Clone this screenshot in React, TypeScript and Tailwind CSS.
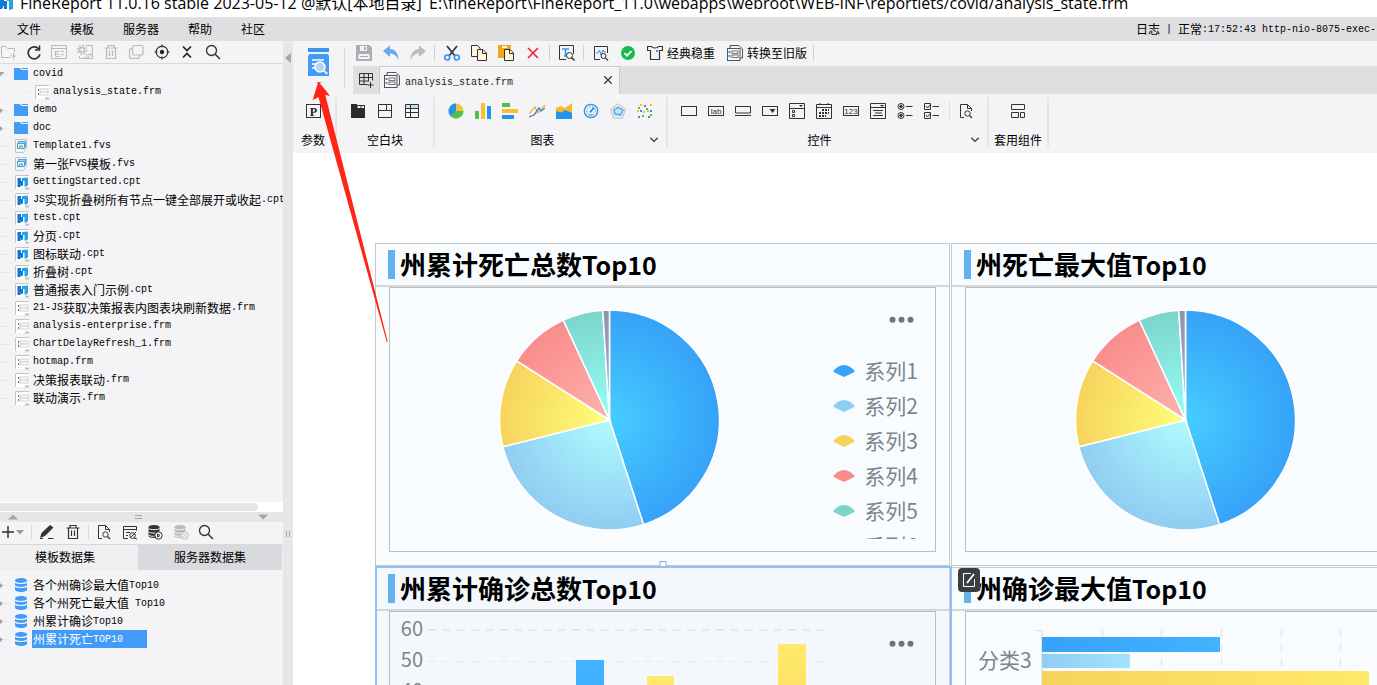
import React from "react";

type IconProps = { children: React.ReactNode; size?: number };

function Svg({ children, size = 16 }: IconProps) {
  return (
    <svg width={size} height={size} viewBox="0 0 16 16" fill="none" stroke="#333" strokeWidth="1" className="block shrink-0" aria-hidden="true">
      {children}
    </svg>
  );
}

/* ---------- mixed CJK / monospace text ---------- */

function Mixed({ text }: { text: string }) {
  const parts = text.split(/([\x20-\x7e]+)/).filter(Boolean);
  return (
    <>
      {parts.map((p, i) =>
        /^[\x20-\x7e]/.test(p) ? (
          <span key={i} className="font-['Liberation_Mono',monospace] text-[10px]">
            {p}
          </span>
        ) : (
          <span key={i} className="text-[12px]">
            {p}
          </span>
        ),
      )}
    </>
  );
}

/* ---------- side panel icons ---------- */

const GREY = "#b9babd";

const FolderPlus = () => (
  <Svg>
    <g stroke={GREY}>
      <path d="M10 13.500H1.500v-11h4l2 2h7v4M13.500 9v6M10.500 12h5.500" />
    </g>
  </Svg>
);
const Refresh = () => (
  <Svg>
    <path d="M12.800 5A6 6 0 1 0 14 10.300" strokeWidth="1.700" />
    <path d="M13.500 1.500v4.500H9" strokeWidth="1.500" />
  </Svg>
);
const TreePanel = () => (
  <Svg>
    <g stroke={GREY}>
      <rect x="0.5" y="1.500" width="15" height="13" />
      <path d="M0 4.500h16M4.500 7v5M4.500 7.500h4M4.500 10h4M4.500 12.500h4M10 7.500h3M10 10.500h3" />
    </g>
  </Svg>
);
const GearWindow = () => (
  <Svg>
    <g stroke={GREY}>
      <circle cx="5" cy="6" r="2.500" strokeWidth="1.500" />
      <circle cx="5" cy="6" r="4.500" strokeWidth="1.500" strokeDasharray="1.800 1.700" />
      <path d="M9 1.500h6.500v13H2.500V12M8 14.500l2-4 5.500-.5M10 14l5-4" />
    </g>
  </Svg>
);
const Trash = ({ color = "#333" }: { color?: string }) => (
  <Svg>
    <g stroke={color} strokeWidth="1.200">
      <path d="M1.500 4h13M5 4V1.500h6V4M3.500 4v10.500h9V4M6.500 6.500v5.500M9.500 6.500v5.500" />
    </g>
  </Svg>
);
const CopyGrey = () => (
  <Svg>
    <g stroke={GREY} strokeWidth="1.200">
      <rect x="4.500" y="1.500" width="10.500" height="9.500" rx="2" />
      <path d="M4.500 4.500h-1a2 2 0 0 0-2 2v6a2 2 0 0 0 2 2h6a2 2 0 0 0 2-2V11" />
    </g>
  </Svg>
);
const Locate = () => (
  <Svg>
    <circle cx="8" cy="8" r="5.800" strokeWidth="1.200" />
    <circle cx="8" cy="8" r="2.200" fill="#222" stroke="none" />
    <path d="M8 .5v3M8 12.500v3M.5 8h3M12.500 8h3" strokeWidth="1.200" />
  </Svg>
);
const Collapse = () => (
  <Svg>
    <path d="M4 2.500l4 4 4-4M4 13.500l4-4 4 4" strokeWidth="1.700" stroke="#222" />
  </Svg>
);
const Search = () => (
  <Svg>
    <circle cx="6.500" cy="6.500" r="5" strokeWidth="1.300" />
    <path d="M10.200 10.200l4.800 4.800" strokeWidth="1.500" />
  </Svg>
);
const Plus = () => (
  <Svg>
    <path d="M8 2v12M2 8h12" strokeWidth="1.500" />
  </Svg>
);
const Pencil = () => (
  <Svg>
    <path d="M1 14l1.500-5L11 1l3.500 2.500L6 12z" fill="#333" stroke="none" />
    <path d="M9 14.500h5.500M1 14.500h3" />
  </Svg>
);
const DocSearch = () => (
  <Svg>
    <path d="M6 14.500H2.500v-13h7l4 4V8M9.500 1.500v4h4" />
    <circle cx="9.500" cy="10.500" r="2.700" />
    <path d="M11.500 12.500l2.500 2.500" strokeWidth="1.300" />
  </Svg>
);
const EditWindow = () => (
  <Svg>
    <path d="M6 14.500H1.500v-12h13v4M1.500 5.500h13M4 8.500h4M4 11.500h2" />
    <circle cx="10.500" cy="11.500" r="2.800" />
    <path d="M9 13l5-5M12 14l3 1" />
  </Svg>
);
const DbAction = ({ color, mark }: { color: string; mark: string }) => (
  <Svg>
    <path d="M1.500 3c0-1.200 2.500-2 5.500-2s5.500.8 5.500 2v9c0 1.200-2.500 2-5.500 2s-5.500-.8-5.500-2z" fill={color} stroke="none" />
    <path d="M1.500 4.500c1.500 1.500 9.500 1.500 11 0M1.500 8c1.500 1.500 9.500 1.500 11 0M1.500 11c1.500 1.500 5 1.500 6 1" stroke="#f4f4f6" />
    <circle cx="11.500" cy="11.500" r="3.700" fill="#f4f4f6" stroke={color} />
    <path d={mark} stroke={color} />
  </Svg>
);

const FolderIcon = () => (
  <Svg>
    <path d="M1 2h6l1.500 2H15v10H1z" fill="#439bf8" stroke="none" />
    <path d="M8.500 2l.5.500H15" stroke="#439bf8" />
  </Svg>
);
const Page = ({ children }: { children: React.ReactNode }) => (
  <Svg>
    <rect x="2" y="1" width="14" height="14" fill="#fff" stroke="none" />
    <path d="M2.500 15V1.500H16" stroke="#c4c4c4" />
    <path d="M12 14.500h4" stroke="#c0c0c0" strokeWidth="2" />
    {children}
  </Svg>
);
const CptIcon = () => (
  <Page>
    <path d="M4.500 4h3.500v3h2v4.500l-2 .5V9.500L7.500 13h-3z" fill="#1177d4" stroke="none" />
    <path d="M9 4l6-.5V11l-1.500 1.500h-2V7H9z" fill="#25a5e8" stroke="none" />
  </Page>
);
const FrmIcon = () => (
  <Page>
    <rect x="7" y="5" width="8" height="3" fill="#fafafa" stroke="#cfcfcf" />
    <rect x="7" y="8" width="8" height="3" fill="#fafafa" stroke="#d4d4d4" />
    <path d="M5.500 5v2M5.500 9v2" stroke="#2d84b5" />
  </Page>
);
const FvsIcon = () => (
  <Svg>
    <path d="M2.500 1.500h11v9l-3 4h-8z" fill="#f4f7fa" stroke="#bfc3c8" />
    <rect x="5.500" y="3.500" width="7" height="5" fill="#9fd3f8" stroke="#4aa2e2" />
    <rect x="4.500" y="5.500" width="7" height="5" fill="#e6f5ee" stroke="#4aa2e2" />
    <path d="M6.500 9.500V8M8 9.500V7M9.500 9.500V8" stroke="#39a66c" />
  </Svg>
);
const DbIcon = () => (
  <Svg>
    <path d="M2 3.500C2 2 4.500 1 8 1s6 1 6 2.500v9C14 14 11.500 15 8 15s-6-1-6-2.500z" fill="#439bf8" stroke="none" />
    <path d="M2 5c2 2 10 2 12 0M2 9c2 2 10 2 12 0" stroke="#f4f4f6" strokeWidth="1.200" />
  </Svg>
);

/* ---------- toolbar icons ---------- */

const Save = () => (
  <Svg>
    <path d="M0 0h13.500L16 2.500V16H0z" fill="#acadb0" stroke="none" />
    <path d="M4 1h7v5H4z" fill="#f4f4f6" stroke="none" />
    <path d="M8 2h2v3H8z" fill="#acadb0" stroke="none" />
    <path d="M2.500 9h11v5h-11z" fill="#f4f4f6" stroke="none" />
    <path d="M4 11.500h8" stroke="#acadb0" />
  </Svg>
);
const Undo = () => (
  <Svg>
    <path d="M0 6l7-5.500V4c5 0 8.500 4 8.500 11.500C13.500 10.500 11 8.500 7 8.500V12z" fill="#67aaf0" stroke="none" />
  </Svg>
);
const Redo = () => (
  <Svg>
    <path d="M16 6L9 .5V4C4 4 .5 8 .5 15.500 2.500 10.500 5 8.500 9 8.500V12z" fill="#bcbdbf" stroke="none" />
  </Svg>
);
const Cut = () => (
  <Svg>
    <path d="M3 1l8 10M13 1L5 11" stroke="#3a3a3a" strokeWidth="1.800" />
    <circle cx="3.200" cy="12.500" r="2.500" stroke="#3b94ec" strokeWidth="1.700" />
    <circle cx="12.800" cy="12.500" r="2.500" stroke="#3b94ec" strokeWidth="1.700" />
  </Svg>
);
const Copy = () => (
  <Svg>
    <path d="M.5.5h6l2.500 2.500v8.500H.5z" fill="#fff6dc" />
    <path d="M6.500 4.500h5.500l3.500 3.500v7.500h-9z" fill="#fff6dc" />
    <path d="M11.500 4.500v4h4" />
  </Svg>
);
const Paste = () => (
  <Svg>
    <path d="M0 0h13v13H0z" fill="#f2a81d" stroke="none" />
    <path d="M4 2h5" stroke="#fff6dc" strokeWidth="2" />
    <path d="M6.500 4.500h5.500l3.500 3.500v7.500h-9z" fill="#fff6dc" />
    <path d="M11.500 4.500v4h4" />
  </Svg>
);
const Remove = () => (
  <Svg>
    <path d="M3 3l10 10M13 3L3 13" stroke="#ea2b32" strokeWidth="1.700" />
  </Svg>
);
const TextSearch = () => (
  <Svg>
    <path d="M7 14.500H.5V.5h14V9" />
    <path d="M3 4h7M6.500 4v7M5 11h3" stroke="#3b94ec" strokeWidth="1.500" />
    <circle cx="10.500" cy="10.500" r="3" fill="#f4f4f6" />
    <path d="M12.500 12.500l3 3" strokeWidth="1.500" />
  </Svg>
);
const ChartSearch = () => (
  <Svg>
    <path d="M7 14.500H1.500v-13h13V8" />
    <path d="M3 8h2l1.500-3L8 10l2-5 1 2h2" stroke="#3b94ec" />
    <circle cx="10.500" cy="11" r="2.500" fill="#f4f4f6" />
    <path d="M12.500 13l2.500 2.500" strokeWidth="1.300" />
  </Svg>
);
const Check = () => (
  <Svg>
    <circle cx="8" cy="8" r="7" fill="#16bb50" stroke="none" />
    <path d="M4.500 8.200l2.500 2.500 4.500-4.500" stroke="#fff" strokeWidth="1.800" />
  </Svg>
);
const Shirt = () => (
  <Svg>
    <path d="M.5 1.500h4c1 2 6 2 7 0h4v4h-3v9h-9v-9h-3z" strokeWidth="1.200" />
    <path d="M9 6h2" stroke="#3b94ec" strokeWidth="2" />
  </Svg>
);
const FormIcon = () => (
  <Svg>
    <path d="M3 3V.5h9L15.500 4v9H13" stroke="#555" />
    <rect x=".5" y="3.500" width="12.500" height="12" fill="#f8f8f9" stroke="#555" />
    <path d="M2.500 6v2M2.500 10v2" stroke="#3b94ec" strokeWidth="2" />
    <rect x="5" y="6" width="6" height="2.500" stroke="#777" />
    <rect x="5" y="10" width="6" height="2.500" stroke="#777" />
  </Svg>
);
const GridPlus = () => (
  <Svg>
    <path d="M1.500 1.500h13v7M1.500 1.500v11h8M1.500 5.500h13M1.500 9h9M6 1.500v11M10.500 1.500v8M12.500 10v6M9.500 13h6" />
  </Svg>
);

/* ---------- ribbon icons ---------- */

const ParamIcon = () => (
  <Svg>
    <rect x="1.500" y="1.500" width="14" height="13" />
    <text x="8.500" y="12.500" textAnchor="middle" fill="#222" stroke="none" className="font-['Liberation_Serif',serif] text-[12px] font-bold">
      P
    </text>
  </Svg>
);
const TabBlock = () => (
  <Svg>
    <path d="M1 1h6v1h8v13H1z" fill="#2b2b2b" stroke="none" />
    <path d="M7.500 3h3v2h-3zM11.500 3H14v2h-2.500z" fill="#f4f4f6" stroke="none" />
  </Svg>
);
const BodyBlock = () => (
  <Svg>
    <path d="M1.500 1.500h13v13h-13zM1.500 7.500h13M9.500 1.500v6" />
  </Svg>
);
const ReportBlock = () => (
  <Svg>
    <path d="M1.500 1.500h13v4h-13z" fill="#bfe2fb" stroke="none" />
    <path d="M1.500 1.500h13v13h-13zM1.500 5.500h13M1.500 9.500h13M6.500 1.500v13" />
  </Svg>
);
const PieIcon = () => (
  <Svg>
    <circle cx="8" cy="8" r="7.500" fill="#fbbf2f" stroke="none" />
    <path d="M8 8V.5A7.500 7.500 0 0 0 3 13.500z" fill="#2196e8" stroke="none" />
    <path d="M8 8L3 13.500A7.500 7.500 0 0 0 15.500 8z" fill="#4fc151" stroke="none" />
  </Svg>
);
const ColumnIcon = () => (
  <Svg>
    <path d="M0 8h4v8H0z" fill="#4fc151" stroke="none" />
    <path d="M6 0h4v16H6z" fill="#fbc02f" stroke="none" />
    <path d="M12 3h4v13h-4z" fill="#2196e8" stroke="none" />
  </Svg>
);
const BarIcon = () => (
  <Svg>
    <path d="M0 0h8v4H0z" fill="#4fc151" stroke="none" />
    <path d="M0 6h16v4H0z" fill="#fbc02f" stroke="none" />
    <path d="M0 12h12v4H0z" fill="#2196e8" stroke="none" />
  </Svg>
);
const LineIcon = () => (
  <Svg>
    <path d="M0 11l6-7 3 6 7-8" stroke="#fbb02f" strokeWidth="1.300" />
    <path d="M0 14l5-2 5-7 2 3 4-3" stroke="#2b86d9" strokeWidth="1.300" />
  </Svg>
);
const AreaIcon = () => (
  <Svg>
    <path d="M0 5l5-2 4 2 7-5v14H0z" fill="#fbb62f" stroke="none" />
    <path d="M0 8l5 1.500 4-2.500 7 3v6H0z" fill="#2196e8" stroke="none" />
  </Svg>
);
const GaugeIcon = () => (
  <Svg>
    <circle cx="8" cy="8" r="6.700" stroke="#2b93e2" strokeWidth="1.300" />
    <circle cx="8" cy="8" r="4.300" stroke="#2b93e2" strokeDasharray="1.500 1.500" />
    <path d="M7 9.500l4-5" stroke="#2b93e2" strokeWidth="2" />
    <path d="M6 12h4" stroke="#2b93e2" />
  </Svg>
);
const RadarIcon = () => (
  <Svg>
    <path d="M8 .7l7.300 5.500-2.800 9h-9l-2.800-9z" stroke="#b8bcc2" />
    <path d="M8 3l5.200 3.800-2 6H4.800l-2-6z" stroke="#c4c8cc" />
    <path d="M8 4.500l5 2.500-2.500 5L5 11 4 7z" fill="#c3e4fa" stroke="#4aa9ea" strokeWidth="1.300" />
  </Svg>
);
const ScatterIcon = () => (
  <Svg>
    <g stroke="none">
      <path d="M3 1h2v2H3zM13 1h2v2h-2zM0 7h2v2H0zM10 7h2v2h-2zM6 8h2v2H6z" fill="#fbb62f" />
      <path d="M7 2h2v2H7zM3 7h2v2H3zM13 7h2v2h-2zM1 13h2v2H1zM11 13h2v2h-2z" fill="#2b93e2" />
      <path d="M9 5h2v2H9zM5 12h2v2H5zM1 4h2v2H1zM13 11h2v2h-2z" fill="#4fc151" />
    </g>
  </Svg>
);
const TextBox = () => (
  <Svg>
    <rect x=".5" y="3.500" width="15" height="9" />
  </Svg>
);
const LabBox = ({ text }: { text: string }) => (
  <Svg>
    <rect x=".5" y="3.500" width="15" height="9" />
    <text x="8" y="11" textAnchor="middle" fill="#333" stroke="none" className="font-['Liberation_Sans',sans-serif] text-[8px]">
      {text}
    </text>
  </Svg>
);
const ButtonBox = () => (
  <Svg>
    <path d="M.5 3.500h15v6.500H.5zM0 12.500h16" />
  </Svg>
);
const ComboBox = () => (
  <Svg>
    <rect x=".5" y="3.500" width="15" height="9" />
    <path d="M7.500 6h6l-3 4z" fill="#333" stroke="none" />
  </Svg>
);
const ComboCheck = () => (
  <Svg>
    <path d="M.5.5h15v15H.5zM.5 5.500h15M3.500 7.500h2v2h-2zM3.500 11.500h2v2h-2z" />
    <path d="M10 2h4l-2 2z" fill="#333" stroke="none" />
  </Svg>
);
const Calendar = () => (
  <Svg>
    <path d="M.5 1.500h15v14H.5zM.5 4.500h15M4 0v2M12 0v2" />
    <path d="M6 7h7M3 10h10M3 13h7" strokeWidth="2" strokeDasharray="2 1" />
  </Svg>
);
const TextArea = () => (
  <Svg>
    <path d="M.5.5h15v15H.5zM.5 4.500h15M3 7.500h10M5 10h7M3 12.500h10" />
    <path d="M10 2h4l-2 2z" fill="#333" stroke="none" />
  </Svg>
);
const RadioGroup = () => (
  <Svg>
    <circle cx="4" cy="3.500" r="3" />
    <circle cx="4" cy="12.500" r="3" />
    <circle cx="4" cy="3.500" r="1.300" fill="#333" />
    <circle cx="4" cy="12.500" r="1.300" fill="#333" />
    <path d="M9 3.500h6.500M9 12.500h6.500" />
  </Svg>
);
const CheckGroup = () => (
  <Svg>
    <path d="M.5.5h6v6h-6zM.5 9.500h6v6h-6zM2 3l1.500 2L6 2M2 12l1.500 2L6 11M8.500 3.500H15M8.500 12.500H15" />
  </Svg>
);
const LayoutIcon = () => (
  <Svg>
    <path d="M1.500 1.500h13v5h-13zM1.500 9.500h7v5h-7zM10.500 9.500h4v5h-4z" />
  </Svg>
);

/* ---------- shared controls ---------- */

function ToolButton({ label, children }: { label: string; children: React.ReactNode }) {
  return (
    <button type="button" aria-label={label} className="flex h-5 w-[21px] shrink-0 items-center justify-center">
      {children}
    </button>
  );
}

function SideButton({ label, children }: { label: string; children: React.ReactNode }) {
  return (
    <button type="button" aria-label={label} className="flex size-4 shrink-0 items-center justify-center">
      {children}
    </button>
  );
}

const Divider = () => <span className="h-4 w-px shrink-0 bg-[#d0d1d4]" />;

function RibbonGroup({ title, label, more, children, className }: { title: string; label: string; more?: boolean; children: React.ReactNode; className: string }) {
  return (
    <section aria-label={label} className={"flex shrink-0 flex-col border-r-2 border-[#e6e6e0] " + className}>
      <div className="flex h-[27px] shrink-0 items-center justify-center gap-[6px]">{children}</div>
      <div className="flex h-[32px] shrink-0 items-center">
        <span className={"flex-1 text-center text-[12px] leading-[18px] whitespace-nowrap " + (more ? "pl-2" : "")}>{title}</span>
        {more && (
          <button type="button" aria-label={label + "更多"} className="flex w-6 justify-center">
            <Svg size={12}>
              <path d="M3 5l5 5 5-5" strokeWidth="1.500" />
            </Svg>
          </button>
        )}
      </div>
    </section>
  );
}

/* ---------- side panel ---------- */

type Kind = "folder" | "frm" | "cpt" | "fvs";
const files: { name: string; kind: Kind; child?: boolean; arrow?: "open" | "closed" }[] = [
  { name: "covid", kind: "folder", arrow: "open" },
  { name: "analysis_state.frm", kind: "frm", child: true },
  { name: "demo", kind: "folder", arrow: "closed" },
  { name: "doc", kind: "folder", arrow: "closed" },
  { name: "Template1.fvs", kind: "fvs" },
  { name: "第一张FVS模板.fvs", kind: "fvs" },
  { name: "GettingStarted.cpt", kind: "cpt" },
  { name: "JS实现折叠树所有节点一键全部展开或收起.cpt", kind: "cpt" },
  { name: "test.cpt", kind: "cpt" },
  { name: "分页.cpt", kind: "cpt" },
  { name: "图标联动.cpt", kind: "cpt" },
  { name: "折叠树.cpt", kind: "cpt" },
  { name: "普通报表入门示例.cpt", kind: "cpt" },
  { name: "21-JS获取决策报表内图表块刷新数据.frm", kind: "frm" },
  { name: "analysis-enterprise.frm", kind: "frm" },
  { name: "ChartDelayRefresh_1.frm", kind: "frm" },
  { name: "hotmap.frm", kind: "frm" },
  { name: "决策报表联动.frm", kind: "frm" },
  { name: "联动演示.frm", kind: "frm" },
];

const kindIcon: Record<Kind, () => React.JSX.Element> = { folder: FolderIcon, frm: FrmIcon, cpt: CptIcon, fvs: FvsIcon };

function Branch({ arrow }: { arrow?: "open" | "closed" }) {
  return (
    <svg width="13" height="16" viewBox="0 0 13 16" className="block shrink-0" aria-hidden="true">
      <path d="M0 8.500h9" stroke="#e8e8ea" />
      {arrow === "open" && <path d="M-4 6h8.500L0 10.500z" fill="#a5a5a7" />}
      {arrow === "closed" && <path d="M-1 5l4 3.500-4 3.500z" fill="#a5a5a7" />}
    </svg>
  );
}

function FileTree() {
  return (
    <ul className="min-h-0 flex-1 overflow-hidden pt-px">
      {files.map((f) => {
        const Icon = kindIcon[f.kind];
        return (
          <li key={f.name} className={"flex h-[18px] items-center " + (f.child ? "pl-5" : "")}>
            <Branch arrow={f.arrow} />
            <button type="button" className="flex h-[18px] items-center gap-1 leading-[18px] whitespace-nowrap">
              <Icon />
              <span className="flex items-center">
                <Mixed text={f.name} />
              </span>
            </button>
          </li>
        );
      })}
    </ul>
  );
}

const datasets = ["各个州确诊最大值Top10", "各个州死亡最大值 Top10", "州累计确诊Top10", "州累计死亡TOP10"];

function SidePanel() {
  return (
    <aside className="flex w-[283px] shrink-0 flex-col bg-[#f4f4f6]">
      <div className="flex h-[23px] items-center border-b border-[#d8d9dc] pb-px">
        <div className="flex w-[221px] items-center justify-between">
          <SideButton label="新建文件夹"><FolderPlus /></SideButton>
          <SideButton label="刷新"><Refresh /></SideButton>
          <SideButton label="打开所在目录"><TreePanel /></SideButton>
          <SideButton label="重命名"><GearWindow /></SideButton>
          <SideButton label="删除"><Trash color={GREY} /></SideButton>
          <SideButton label="复制"><CopyGrey /></SideButton>
          <SideButton label="定位"><Locate /></SideButton>
          <SideButton label="全部折叠"><Collapse /></SideButton>
          <SideButton label="搜索"><Search /></SideButton>
        </div>
      </div>
      <FileTree />
      <div className="flex h-[10px] shrink-0 items-center bg-white">
        <div className="h-2 w-[258px] rounded-r bg-[#e6e6e6]" />
      </div>
      <div className="flex h-[10px] shrink-0 items-center justify-between bg-[#e6e6e6] pr-[15px] pl-2">
        <svg width="10" height="6" className="block" aria-hidden="true"><path d="M0 5.500L5 .5l5 5z" fill="#a5a5a7" /></svg>
        <svg width="7" height="4" className="block" aria-hidden="true"><path d="M0 .5h7M0 3.500h7" stroke="#a5a5a7" /></svg>
        <svg width="10" height="6" className="block" aria-hidden="true"><path d="M0 .5h10l-5 5z" fill="#a5a5a7" /></svg>
      </div>
      <div className="flex h-[23px] shrink-0 items-center border-b border-[#d8d9dc] pb-[2px]">
        <SideButton label="新增数据集"><Plus /></SideButton>
        <svg width="8" height="5" className="block shrink-0" aria-hidden="true"><path d="M0 0h8L4 4.500z" fill="#999" /></svg>
        <span className="mx-[7px] h-4 w-px shrink-0 bg-[#d8d9dc]" />
        <div className="flex w-[42px] justify-between">
          <SideButton label="编辑"><Pencil /></SideButton>
          <SideButton label="删除数据集"><Trash /></SideButton>
        </div>
        <span className="mx-[7px] h-4 w-px shrink-0 bg-[#d8d9dc]" />
        <div className="flex w-[118px] justify-between">
          <SideButton label="预览"><DocSearch /></SideButton>
          <SideButton label="连接设置"><EditWindow /></SideButton>
          <SideButton label="启用缓存"><DbAction color="#333" mark="M10.500 10l2.500 1.500-2.500 1.500z" /></SideButton>
          <SideButton label="停用缓存"><DbAction color={GREY} mark="M10 10l3 3M13 10l-3 3" /></SideButton>
          <SideButton label="搜索数据集"><Search /></SideButton>
        </div>
      </div>
      <div className="flex h-[25px] shrink-0 pr-px text-[12px]" role="tablist">
        <button type="button" role="tab" aria-selected="true" className="w-[138px] bg-[#efeff1] pr-2 pb-[2px]">模板数据集</button>
        <button type="button" role="tab" aria-selected="false" className="flex-1 bg-[#d9dade] pb-[2px]">服务器数据集</button>
      </div>
      <ul className="h-[115px] shrink-0 pt-[6px]">
        {datasets.map((d, i) => (
          <li key={d} className="flex h-[18px] items-center">
            <Branch arrow="closed" />
            <button type="button" className="flex h-[18px] items-center gap-[3px] whitespace-pre">
              <DbIcon />
              <span className={"flex h-[18px] items-center pl-px " + (i === 3 ? "bg-[#439bf8] pr-6 text-white" : "")}>
                <Mixed text={d} />
              </span>
            </button>
          </li>
        ))}
      </ul>
    </aside>
  );
}

/* ---------- charts ---------- */

const slices = [
  { id: "s1", from: 0, to: 162, inner: "#46cdff", outer: "#36a2f8" },
  { id: "s2", from: 162, to: 255.900, inner: "#b0fbff", outer: "#90cdf2" },
  { id: "s3", from: 255.900, to: 302.500, inner: "#ffff78", outer: "#f6d35d" },
  { id: "s4", from: 302.500, to: 335.200, inner: "#ffb2ae", outer: "#f88d8b" },
  { id: "s5", from: 335.200, to: 356.500, inner: "#97fff7", outer: "#7bd5cd" },
  { id: "s6", from: 356.500, to: 360, inner: "#b3b3d8", outer: "#8f93ac" },
];

function point(deg: number) {
  const a = (deg * Math.PI) / 180;
  return (110.5 + 110 * Math.sin(a)).toFixed(2) + " " + (111 - 110 * Math.cos(a)).toFixed(2);
}

function Pie({ id }: { id: string }) {
  return (
    <svg width="222" height="222" viewBox="0 0 222 222" className="mt-[21px] ml-[109px] block shrink-0" role="img" aria-label="饼图">
      <defs>
        {slices.map((s) => (
          <radialGradient key={s.id} id={id + s.id} gradientUnits="userSpaceOnUse" cx="110.5" cy="111" r="110">
            <stop offset="0" stopColor={s.inner} />
            <stop offset="1" stopColor={s.outer} />
          </radialGradient>
        ))}
      </defs>
      {slices.map((s) => (
        <path key={s.id} d={`M110.5 111L${point(s.from)}A110 110 0 0 1 ${point(s.to)}Z`} fill={`url(#${id + s.id})`} stroke="#fff" strokeWidth="1.500" />
      ))}
    </svg>
  );
}

function MoreButton() {
  return (
    <button type="button" aria-label="更多操作" className="block">
      <svg width="26" height="8" viewBox="0 0 26 8" className="block" fill="#737373" aria-hidden="true">
        <circle cx="3.500" cy="3.700" r="3" />
        <circle cx="12.500" cy="3.700" r="3" />
        <circle cx="21.500" cy="3.700" r="3" />
      </svg>
    </button>
  );
}

function PieBody({ id }: { id: string }) {
  return (
    <div className="flex h-full justify-between">
      <Pie id={id} />
      <div className="mr-[17px] flex flex-col pt-7">
        <div className="flex justify-end pr-[3px]"><MoreButton /></div>
        <ul className="mt-[29px] h-[186px] overflow-hidden text-[21px] text-[#7b858e]">
          {slices.map((s, i) => (
            <li key={s.id} className="flex h-[35px] items-center gap-[9px] whitespace-nowrap">
              <svg width="22" height="12" viewBox="0 0 22 12" className="block shrink-0" aria-hidden="true">
                <path d="M0 6.500Q5 0 11 0t11 6.500Q15 10 11 12 7 10 0 6.500z" fill={s.outer} />
              </svg>
              <span className="leading-[35px]">系列{i + 1}</span>
            </li>
          ))}
        </ul>
      </div>
    </div>
  );
}

function ColumnBody() {
  return (
    <div className="flex h-full justify-between">
      <svg width="440" height="263" viewBox="0 0 440 263" className="block shrink-0" role="img" aria-label="柱形图">
        <defs>
          <linearGradient id="colBlue" x1="0" y1="0" x2="0" y2="1"><stop offset="0" stopColor="#40b4ff" /><stop offset="1" stopColor="#36a2f8" /></linearGradient>
          <linearGradient id="colYellow" x1="0" y1="0" x2="0" y2="1"><stop offset="0" stopColor="#ffe96a" /><stop offset="1" stopColor="#f6d35d" /></linearGradient>
        </defs>
        {[60, 50, 40, 30, 20, 10, 0].map((v, i) => (
          <g key={v}>
            <text x="33" y={24 + i * 31} textAnchor="end" fill="#7b858e" className="text-[20px]">{v}</text>
            <path d={`M38 ${18 + i * 31.5}H434`} stroke="#e5e9ed" strokeWidth={i === 0 ? 2 : 1} strokeDasharray="8 6.400" />
          </g>
        ))}
        <path d="M186 48h28v160h-28z" fill="url(#colBlue)" />
        <path d="M257 64h27v144h-27z" fill="url(#colYellow)" />
        <path d="M388 32h28v176h-28z" fill="url(#colYellow)" />
      </svg>
      <div className="mr-5 pt-7"><MoreButton /></div>
    </div>
  );
}

function HorizontalBody() {
  return (
    <svg width="440" height="263" viewBox="0 0 440 263" className="block" role="img" aria-label="条形图">
      <defs>
        <linearGradient id="rowBlue"><stop offset="0" stopColor="#36a2f8" /><stop offset="1" stopColor="#40b4ff" /></linearGradient>
        <linearGradient id="rowLight"><stop offset="0" stopColor="#90cdf2" /><stop offset="1" stopColor="#a2e3ff" /></linearGradient>
        <linearGradient id="rowYellow"><stop offset="0" stopColor="#f6d35d" /><stop offset="1" stopColor="#ffe96a" /></linearGradient>
      </defs>
      <text x="12" y="56" fill="#7b858e" className="text-[21px]">分类3</text>
      <path d="M70 18.500h6M76 18v240" stroke="#dde2e6" strokeWidth="1.500" />
      {[136, 195, 255, 315, 374].map((x) => (
        <path key={x} d={`M${x + 0.5} 17V258`} stroke="#e3e7ee" strokeWidth="1.500" strokeDasharray="8 6.400" />
      ))}
      <path d="M76 25h178v15H76z" fill="url(#rowBlue)" />
      <path d="M76 42h88v14H76z" fill="url(#rowLight)" />
      <path d="M76 59h327v15H76z" fill="url(#rowYellow)" />
    </svg>
  );
}

function Card({ cjk, latin, selected, badge, children }: { cjk: string; latin: string; selected?: boolean; badge?: boolean; children: React.ReactNode }) {
  return (
    <article className={"relative flex h-[323px] flex-col border border-[#c6c8ca] " + (selected ? "bg-[#f4f8fd]" : "bg-[#f9fcff]")}>
      <header className="flex h-[43px] shrink-0 items-center gap-[5px] border-b-2 border-[#d6d7d8] pl-3">
        <span className="h-[29px] w-[7px] bg-[#63b2ee]" />
        <h2 className="pb-[2px] text-[26px] leading-[39px] font-bold whitespace-nowrap text-black">
          {cjk}
          <span className="text-[25px]">{latin}</span>
        </h2>
      </header>
      <div className="mx-[13px] mb-[13px] min-h-0 flex-1 overflow-hidden border border-[#bbbdc0]">{children}</div>
      {selected && (
        <>
          <span className="pointer-events-none absolute -top-[2px] -right-[3px] bottom-0 -left-px z-10 border-2 border-[#8bc0f8]" />
          <span className="absolute -top-[7px] left-1/2 size-[7px] -translate-x-1/2 border border-[#93abc4] bg-white" />
        </>
      )}
      {badge && (
        <button type="button" aria-label="编辑" className="absolute top-0 left-[6px] z-20 flex h-6 w-[22px] items-center justify-center rounded-sm bg-[#3b3e41]">
          <svg width="14" height="16" viewBox="0 0 14 16" fill="none" stroke="#fff" className="block" aria-hidden="true">
            <path d="M9 1.500H1.500v13h11V7" />
            <path d="M5 11l7-9" strokeWidth="1.800" />
          </svg>
        </button>
      )}
    </article>
  );
}

/* ---------- page ---------- */

export default function App() {
  return (
    <div className="relative flex h-screen flex-col overflow-hidden bg-white font-['Noto_Sans_CJK_SC',sans-serif] text-black">
      <div className="flex h-[17px] shrink-0 items-end overflow-hidden">
        <svg width="14" height="17" viewBox="0 0 14 17" className="mr-[6px] block shrink-0" aria-hidden="true">
          <path d="M0 0h4v1h3v8H4v-4L2 9H0z" fill="#1177d4" />
          <path d="M7 0h6v9L9 10V1H7z" fill="#25a5e8" />
        </svg>
        <div className="flex pb-[3px] font-['Open_Sans','Noto_Sans_CJK_SC',sans-serif] text-[16px] leading-[22px] whitespace-pre">
          <span className="w-[409px]">FineReport 11.0.16 stable 2023-05-12 @默认[本地目录]</span>
          <span>E:\fineReport\FineReport_11.0\webapps\webroot\WEB-INF\reportlets/covid/analysis_state.frm</span>
        </div>
      </div>

      <div className="flex h-6 shrink-0 items-center justify-between bg-[#dfdfe1] text-[12px]">
        <nav className="flex gap-[29px] pb-px pl-[17px]">
          {["文件", "模板", "服务器", "帮助", "社区"].map((m) => (
            <button key={m} type="button">{m}</button>
          ))}
        </nav>
        <p className="flex w-[241px] items-center overflow-hidden whitespace-pre">
          <Mixed text="日志 | 正常:17:52:43 http-nio-8075-exec-" />
        </p>
      </div>

      <div className="flex min-h-0 flex-1">
        <SidePanel />
        <div className="flex w-[10px] shrink-0 flex-col items-center justify-between bg-[#e6e6e6] pt-[12px] pb-[148px]">
          <svg width="6" height="10" className="block" aria-hidden="true"><path d="M6 0v10L0 5z" fill="#a5a5a7" /></svg>
          <svg width="4" height="6" className="block" aria-hidden="true"><path d="M.5 0v6M3.500 0v6" stroke="#a5a5a7" /></svg>
        </div>

        <main className="flex min-w-0 flex-1 flex-col">
          <div className="shrink-0 bg-[#f4f4f6]">
            <div className="flex">
              <div className="flex w-[60px] shrink-0 items-start pt-[7px] pl-[15px]">
                <button type="button" aria-label="预览模板">
                  <svg width="22" height="36" viewBox="0 0 22 36" className="block" aria-hidden="true">
                    <path d="M0 0h21v4H0z" fill="#3a93f2" />
                    <path d="M0 8l1.500-2H20l1 2v20H0z" fill="#439bf8" />
                    <path d="M4 12h12M4 16h5M4 20h4" stroke="#fff" strokeWidth="1.500" />
                    <circle cx="12" cy="19" r="5" fill="#b5d5f5" stroke="#fff" strokeWidth="1.500" />
                    <path d="M15.500 22.500l4 3.500" stroke="#e8e8e8" strokeWidth="2" />
                    <path d="M8 34h6l-3 2z" fill="#999" />
                  </svg>
                </button>
                <span className="ml-[14px] h-10 w-px bg-[#d5d6d8]" />
              </div>
              <div className="min-w-0 flex-1">
                <div className="flex h-[25px] items-center gap-[6px] pb-[2px]">
                  <ToolButton label="保存"><Save /></ToolButton>
                  <ToolButton label="撤销"><Undo /></ToolButton>
                  <ToolButton label="重做"><Redo /></ToolButton>
                  <Divider />
                  <ToolButton label="剪切"><Cut /></ToolButton>
                  <ToolButton label="复制"><Copy /></ToolButton>
                  <ToolButton label="粘贴"><Paste /></ToolButton>
                  <ToolButton label="删除"><Remove /></ToolButton>
                  <Divider />
                  <ToolButton label="全局查找"><TextSearch /></ToolButton>
                  <Divider />
                  <ToolButton label="性能分析"><ChartSearch /></ToolButton>
                  <ToolButton label="校验"><Check /></ToolButton>
                  <button type="button" className="ml-[3px] flex items-center gap-1 text-[12px] whitespace-nowrap"><Shirt />经典稳重</button>
                  <button type="button" className="ml-[6px] flex items-center gap-1 text-[12px] whitespace-nowrap"><FormIcon />转换至旧版</button>
                  <Divider />
                </div>
                <div className="flex h-7 bg-[#dfdfe1]">
                  <button type="button" aria-label="新建模板" className="flex w-[26px] shrink-0 items-center justify-center"><GridPlus /></button>
                  <div className="flex w-[241px] items-center border border-b-0 border-[#c9cacd] bg-[#f4f4f6] pr-1 pb-px pl-1 text-[12px]">
                    <FormIcon />
                    <span className="ml-[5px] flex-1 text-[#222]"><Mixed text="analysis_state.frm" /></span>
                    <button type="button" aria-label="关闭" className="flex size-[14px] items-center justify-center">
                      <Svg size={10}><path d="M2 2l12 12M14 2L2 14" strokeWidth="2" /></Svg>
                    </button>
                  </div>
                </div>
              </div>
            </div>
            <div className="flex h-[59px] pt-[3px]">
              <div className="flex h-[50px]">
                <RibbonGroup title="参数" label="参数" className="w-11 pr-[2px]"><ToolButton label="参数面板"><ParamIcon /></ToolButton></RibbonGroup>
                <RibbonGroup title="空白块" label="空白块" className="w-[98px]">
                  <ToolButton label="Tab块"><TabBlock /></ToolButton>
                  <ToolButton label="绝对画布块"><BodyBlock /></ToolButton>
                  <ToolButton label="报表块"><ReportBlock /></ToolButton>
                </RibbonGroup>
                <RibbonGroup title="图表" label="图表" more className="w-[233px]">
                  <ToolButton label="饼图"><PieIcon /></ToolButton>
                  <ToolButton label="柱形图"><ColumnIcon /></ToolButton>
                  <ToolButton label="条形图"><BarIcon /></ToolButton>
                  <ToolButton label="折线图"><LineIcon /></ToolButton>
                  <ToolButton label="面积图"><AreaIcon /></ToolButton>
                  <ToolButton label="仪表盘"><GaugeIcon /></ToolButton>
                  <ToolButton label="雷达图"><RadarIcon /></ToolButton>
                  <ToolButton label="散点图"><ScatterIcon /></ToolButton>
                </RibbonGroup>
                <RibbonGroup title="控件" label="控件" more className="w-[321px]">
                  <ToolButton label="文本控件"><TextBox /></ToolButton>
                  <ToolButton label="标签控件"><LabBox text="lab" /></ToolButton>
                  <ToolButton label="按钮控件"><ButtonBox /></ToolButton>
                  <ToolButton label="下拉框"><ComboBox /></ToolButton>
                  <ToolButton label="下拉复选框"><ComboCheck /></ToolButton>
                  <ToolButton label="日期控件"><Calendar /></ToolButton>
                  <ToolButton label="数字控件"><LabBox text="123" /></ToolButton>
                  <ToolButton label="文本域"><TextArea /></ToolButton>
                  <ToolButton label="单选按钮组"><RadioGroup /></ToolButton>
                  <ToolButton label="复选按钮组"><CheckGroup /></ToolButton>
                  <span className="h-5 w-px shrink-0 bg-[#e0e0d8]" />
                  <ToolButton label="查询"><DocSearch /></ToolButton>
                </RibbonGroup>
                <RibbonGroup title="套用组件" label="套用组件" className="w-[60px]"><ToolButton label="组件"><LayoutIcon /></ToolButton></RibbonGroup>
              </div>
            </div>
          </div>

          <div className="min-h-0 flex-1 overflow-hidden pt-[90px] pl-[82px]">
            <div className="grid w-[1151px] grid-cols-2 gap-px bg-white">
              <Card cjk="州累计死亡总数" latin="Top10"><PieBody id="a" /></Card>
              <Card cjk="州死亡最大值" latin="Top10"><PieBody id="b" /></Card>
              <Card cjk="州累计确诊总数" latin="Top10" selected><ColumnBody /></Card>
              <Card cjk="州确诊最大值" latin="Top10" badge><HorizontalBody /></Card>
            </div>
          </div>
        </main>
      </div>

      <svg width="80" height="264" viewBox="0 0 80 264" className="pointer-events-none absolute top-20 left-[310px] z-30" aria-hidden="true">
        <path d="M8.300 1.500L20 15.700 15.300 15 77.700 261.500 76.800 262 8.500 17.300 2.700 20z" fill="#fe2416" />
      </svg>
    </div>
  );
}
